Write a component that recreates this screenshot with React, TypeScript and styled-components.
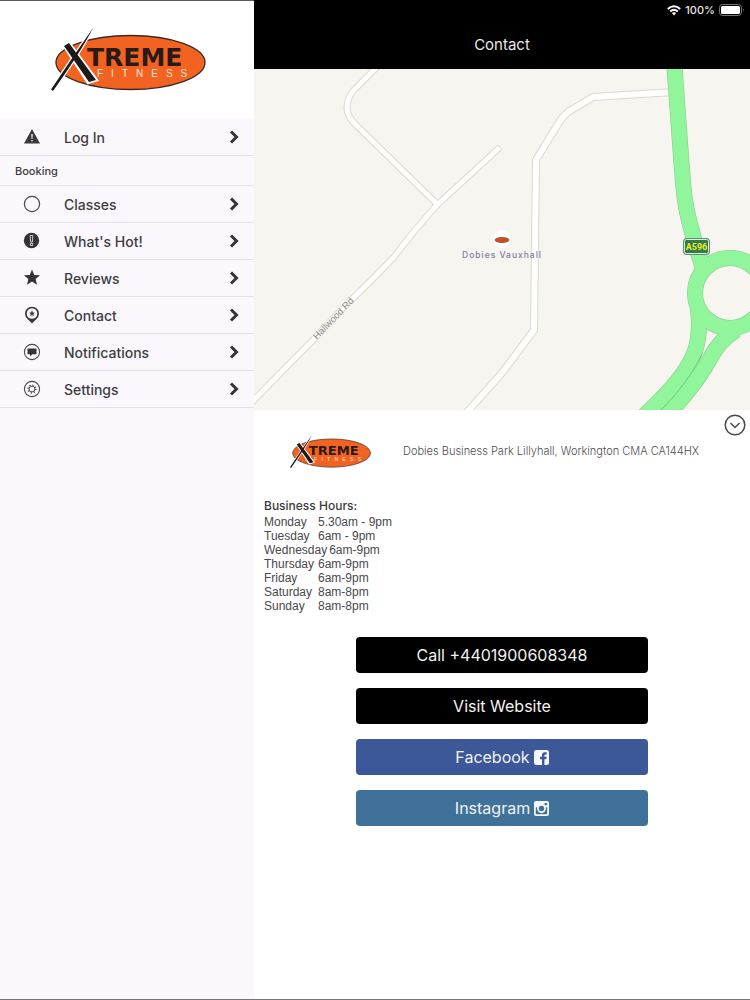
import React from "react";
import styled, { createGlobalStyle } from "styled-components";

const sans = `"Liberation Sans", Arial, sans-serif`;
const ui = `Inter, "Liberation Sans", sans-serif`;

const GlobalStyle = createGlobalStyle`
  *, *::before, *::after { box-sizing: border-box; }
  body { margin: 0; background: #fff; color: #3c3a3e; font-family: ${sans}; }
`;

const Screen = styled.div`
  display: flex;
  min-height: 100vh;
  border-bottom: 1px solid #77757a;
`;

const Sidebar = styled.aside`
  flex: 0 0 254px;
  background: #faf8fc;
  border-top: 1px solid #5c595e;
`;

const Brand = styled.div`
  height: 118px;
  padding: 27px 0 0 51px;
  background: #fff;
`;

const MenuList = styled.ul`
  list-style: none;
  margin: 0;
  padding: 0;
`;

const MenuItem = styled.li`
  border-bottom: 1px solid #e3e1e6;
`;

const MenuLink = styled.a`
  display: grid;
  grid-template-columns: 20px 1fr 16px;
  column-gap: 22px;
  align-items: center;
  height: 36px;
  padding: 0 12px 0 22px;
  color: #3f3d41;
  font: 500 14px/20px ${ui};
  text-decoration: none;
  svg { display: block; }
`;

const MenuLabel = styled.span`
  padding-top: 2px;
`;

const MenuHeading = styled.h2`
  margin: 0;
  padding: 1px 15px 0;
  font: 500 11px/28px ${ui};
  color: #3f3d41;
  border-bottom: 1px solid #e3e1e6;
`;

const Main = styled.main`
  flex: 1;
  min-width: 0;
  background: #fff;
`;

const TopBar = styled.header`
  height: 69px;
  background: #000;
  color: #e8e8e8;
`;

const StatusBar = styled.div`
  display: flex;
  justify-content: flex-end;
  align-items: center;
  gap: 4px;
  height: 20px;
  padding-right: 5px;
  font: 500 11px/20px ${ui};
`;

const Title = styled.h1`
  margin: 0;
  padding-top: 15px;
  text-align: center;
  font: 400 15px/20px ${ui};
`;

const MapView = styled.svg`
  display: block;
  width: 100%;
  height: 341px;
  background: #f7f5ef;
`;

const InfoRow = styled.section`
  display: flex;
  align-items: center;
  height: 82px;
  padding: 0 4px 0 36px;
`;

const Address = styled.address`
  flex: 1;
  margin-left: 32px;
  font: normal 300 11px/16px ${ui};
  color: #4e4c50;
`;

const Toggle = styled.button`
  align-self: flex-start;
  margin-top: 4px;
  padding: 0;
  border: 0;
  background: none;
  svg { display: block; }
`;

const Hours = styled.section`
  padding: 5px 10px 0;
`;

const HoursTitle = styled.h2`
  margin: 0;
  font: 500 12px/18px ${ui};
`;

const HoursTable = styled.table`
  display: block;
  font: 400 12px/14px ${sans};
  color: #4a484c;
  tbody { display: block; }
`;

const HoursRow = styled.tr`
  display: flex;
  gap: 2px;
`;

const Day = styled.th`
  min-width: 52px;
  padding: 0;
  font-weight: 400;
  text-align: left;
`;

const Time = styled.td`
  padding: 0;
`;

const Actions = styled.nav`
  display: flex;
  flex-direction: column;
  gap: 15px;
  width: 59%;
  margin: 24px auto 0;
`;

const ActionButton = styled.button<{ $color: string }>`
  display: flex;
  align-items: center;
  justify-content: center;
  gap: 4px;
  height: 36px;
  padding: 0;
  border: 0;
  border-radius: 4px;
  background: ${(p) => p.$color};
  color: #f2f2f2;
  font: 400 16px/20px ${ui};
`;

const Logo = ({ width, height }: { width: number; height: number }) => (
  <svg width={width} height={height} viewBox="51 28 155 63" role="img" aria-label="Xtreme Fitness">
    <ellipse cx="130.500" cy="62.500" rx="74.500" ry="27" fill="#f26322" stroke="#3a2a26" strokeWidth="1.300" />
    <path d="M93 28 Q82 50 53 91 L51 89.500 Q72 58 93 28Z M64 46 L69 42.500 L97 80 L88 83Z" fill="#fff" stroke="#fff" strokeWidth="2.500" />
    <path d="M93 28 Q82 50 53 91 L51 89.500 Q72 58 93 28Z M64 46 L69 43 L96 80 L89 82Z" fill="#1d191b" />
    <text x="87" y="66" fontFamily="DejaVu Sans" fontWeight="700" fontSize="25" fill="#2a1a17">TREME</text>
    <text x="97" y="77" fontFamily="Liberation Sans" fontSize="10" letterSpacing="8" fill="#ffe0cc">FITNESS</text>
  </svg>
);

const Chevron = () => (
  <svg width="16" height="16" viewBox="0 0 16 16" fill="none" stroke="#353337" strokeWidth="3">
    <path d="M5 2.500 L10.500 8 L5 13.500" />
  </svg>
);

const STAR = "M10 1.500 L12.400 7.300 L18.500 7.700 L13.800 11.600 L15.300 17.500 L10 14.300 L4.700 17.500 L6.200 11.600 L1.500 7.700 L7.600 7.300Z";

const icons: Record<string, React.ReactNode> = {
  warning: (
    <>
      <path d="M10 2 L18 16.500 H2Z" fill="#3a383c" />
      <path d="M9 7 H11 L10.600 12 H9.400Z M9.200 13 H10.800 V14.600 H9.200Z" fill="#c9c7cb" />
    </>
  ),
  circle: <circle cx="10" cy="10" r="7.600" fill="none" stroke="#4a484c" strokeWidth="1.200" />,
  alert: (
    <>
      <circle cx="9.500" cy="9.500" r="7.700" fill="#343236" />
      <path d="M8.200 4.500 H10.800 L10.400 11 H8.600Z M8.400 12.300 H10.600 V14.500 H8.400Z" fill="#343236" stroke="#dddbe0" strokeWidth="0.900" />
    </>
  ),
  star: <path d={STAR} fill="#343236" transform="translate(0.500 0) scale(0.950)" />,
  pin: (
    <>
      <path d="M10 18.500 L5.500 14 A7 7 0 1 1 14.500 14Z" fill="#3a383c" />
      <circle cx="10" cy="8.500" r="5.300" fill="#faf8fc" />
      <path d={STAR} fill="#3a383c" transform="translate(6.500 5) scale(0.350)" />
    </>
  ),
  chat: (
    <>
      <circle cx="10" cy="10" r="7.600" fill="none" stroke="#4a484c" strokeWidth="1.100" />
      <path d="M6.200 6.500 H13.800 Q14.500 6.500 14.500 7.200 V11.500 Q14.500 12.200 13.800 12.200 H10.500 L8 14.200 V12.200 H6.200 Q5.500 12.200 5.500 11.500 V7.200 Q5.500 6.500 6.200 6.500Z" fill="#343236" />
    </>
  ),
  gear: (
    <g fill="none" stroke="#4a484c">
      <circle cx="10" cy="10" r="7.600" strokeWidth="1.100" />
      <circle cx="10" cy="10" r="2.900" />
      <circle cx="10" cy="10" r="3.900" strokeWidth="1.500" strokeDasharray="1.200 1.863" />
    </g>
  ),
};

const MenuRow = ({ icon, label }: { icon: string; label: string }) => (
  <MenuItem>
    <MenuLink href="#">
      <svg width="20" height="20" viewBox="0 0 20 20" aria-hidden="true">{icons[icon]}</svg>
      <MenuLabel>{label}</MenuLabel>
      <Chevron />
    </MenuLink>
  </MenuItem>
);

const booking = [
  ["circle", "Classes"],
  ["alert", "What's Hot!"],
  ["star", "Reviews"],
  ["pin", "Contact"],
  ["chat", "Notifications"],
  ["gear", "Settings"],
];

const hours = [
  ["Monday", "5.30am - 9pm"],
  ["Tuesday", "6am - 9pm"],
  ["Wednesday", "6am-9pm"],
  ["Thursday", "6am-9pm"],
  ["Friday", "6am-9pm"],
  ["Saturday", "8am-8pm"],
  ["Sunday", "8am-8pm"],
];

const lanes = [
  "M382 62 L354 90 Q347 98 347 108 Q347 115 354 123 L437 204",
  "M498 149 L437 205 Q412 233 394 257 Q370 282 349 302 L314 339 L250 404",
];
const avenue = "M674 92 L593 97 L568 112 Q562 117 558 124 L536 160 L534 330 L502 373 L460 420";
const trunk = [
  "M674 60 L682 170 Q684 200 688 216 Q693 238 703 268",
  "M698 308 Q701 336 694 354 C686 375 664 397 640 420",
  "M736 330 Q719 341 711 357 C700 378 684 398 662 420",
];

const StreetMap = () => (
  <MapView viewBox="254 69 496 341" preserveAspectRatio="xMidYMid slice" role="img" aria-label="Map">
    <g fill="none" strokeLinecap="round" strokeLinejoin="round">
      <g stroke="#dad8d2">
        {lanes.map((d) => <path key={d} d={d} strokeWidth="7" />)}
        <path d={avenue} strokeWidth="8" strokeLinejoin="miter" />
      </g>
      <g stroke="#fffffd">
        {lanes.map((d) => <path key={d} d={d} strokeWidth="5" />)}
        <path d={avenue} strokeWidth="6" strokeLinejoin="miter" />
      </g>
      <g stroke="#85c98c" strokeWidth="16" strokeLinecap="butt">
        {trunk.map((d) => <path key={d} d={d} />)}
        <circle cx="730" cy="293" r="35" />
      </g>
      <g stroke="#91f59b" strokeWidth="15" strokeLinecap="butt">
        {trunk.map((d) => <path key={d} d={d} />)}
        <circle cx="730" cy="293" r="35" />
      </g>
      <path d="M702 354 C692 374 680 391 660 411" stroke="#74c97e" />
    </g>
    <rect x="683.500" y="238.500" width="26" height="16" rx="3" fill="#2f7d4b" stroke="#5f8f70" />
    <rect x="684.500" y="239.500" width="24" height="14" rx="2" fill="none" stroke="#dfeee2" />
    <text x="696.500" y="250" textAnchor="middle" fontFamily="Roboto" fontWeight="700" fontSize="9" fill="#f5e72a">A596</text>
    <text transform="translate(317 340) rotate(-46)" fontFamily="Liberation Sans" fontSize="9.500" fill="#8f8d8b" stroke="#f7f5ef" strokeWidth="2" paintOrder="stroke">Hallwood Rd</text>
    <circle cx="502" cy="239" r="9" fill="#fff" />
    <ellipse cx="502" cy="240" rx="7" ry="2.500" fill="#c8501f" stroke="#a8573c" />
    <text x="502" y="258" textAnchor="middle" fontFamily="Inter" fontWeight="500" fontSize="8.500" letterSpacing="1" fill="#7d7ca3">Dobies Vauxhall</text>
  </MapView>
);

export default function App() {
  return (
    <>
      <GlobalStyle />
      <Screen>
        <Sidebar>
          <Brand><Logo width={155} height={63} /></Brand>
          <MenuList><MenuRow icon="warning" label="Log In" /></MenuList>
          <MenuHeading>Booking</MenuHeading>
          <MenuList>
            {booking.map(([icon, label]) => <MenuRow key={label} icon={icon} label={label} />)}
          </MenuList>
        </Sidebar>
        <Main>
          <TopBar>
            <StatusBar>
              <svg width="14" height="11" viewBox="0 0 14 11" aria-hidden="true" fill="none" stroke="#fff" strokeWidth="2">
                <path d="M0.800 4 Q7 -1.600 13.200 4" />
                <path d="M3.200 6.500 Q7 3.200 10.800 6.500" />
                <path d="M4.900 8 Q7 6.400 9.100 8 L7 10.400Z" fill="#fff" stroke="none" />
              </svg>
              <span>100%</span>
              <svg width="26" height="12" viewBox="0 0 26 12" aria-hidden="true">
                <rect x="0.500" y="0.500" width="22" height="11" rx="3" fill="none" stroke="#77757a" />
                <rect x="2" y="2" width="19" height="8" rx="1.500" fill="#fff" />
                <path d="M24 4 Q25.500 6 24 8Z" fill="#77757a" />
              </svg>
            </StatusBar>
            <Title>Contact</Title>
          </TopBar>
          <StreetMap />
          <InfoRow>
            <Logo width={81} height={33} />
            <Address>Dobies Business Park Lillyhall, Workington CMA CA144HX</Address>
            <Toggle aria-label="Collapse details">
              <svg width="22" height="22" viewBox="0 0 22 22" fill="none" stroke="#4a484c" strokeWidth="1.500">
                <circle cx="11" cy="11" r="9.800" />
                <path d="M6.500 9 L11 13.500 L15.500 9" />
              </svg>
            </Toggle>
          </InfoRow>
          <Hours>
            <HoursTitle>Business Hours:</HoursTitle>
            <HoursTable>
              <tbody>
                {hours.map(([day, time]) => (
                  <HoursRow key={day}><Day scope="row">{day}</Day><Time>{time}</Time></HoursRow>
                ))}
              </tbody>
            </HoursTable>
          </Hours>
          <Actions>
            <ActionButton $color="#000">Call +4401900608348</ActionButton>
            <ActionButton $color="#000">Visit Website</ActionButton>
            <ActionButton $color="#3c5899">
              Facebook
              <svg width="15" height="15" viewBox="0 0 15 15" aria-hidden="true">
                <rect width="15" height="15" rx="2.500" fill="#f5f7fb" />
                <path d="M8 15 V9.200 H6 V6.800 H8 V5 Q8 2.300 10.800 2.300 H12.700 V4.600 H11.400 Q10.400 4.600 10.400 5.500 V6.800 H12.700 L12.300 9.200 H10.400 V15Z" fill="#3c5899" />
              </svg>
            </ActionButton>
            <ActionButton $color="#40719b">
              Instagram
              <svg width="15" height="15" viewBox="0 0 15 15" aria-hidden="true">
                <rect width="15" height="15" rx="2" fill="#f5f7fb" />
                <path d="M1.800 6.300 H3.200 A4.500 4.500 0 1 0 11.800 6.300 H13.200 V12.400 Q13.200 13.200 12.400 13.200 H2.600 Q1.800 13.200 1.800 12.400Z" fill="#40719b" />
                <circle cx="7.500" cy="7.500" r="3.600" fill="#f5f7fb" />
                <circle cx="7.500" cy="7.500" r="2.700" fill="#40719b" />
                <rect x="10.600" y="1.900" width="2.500" height="2.400" rx="0.500" fill="#40719b" />
              </svg>
            </ActionButton>
          </Actions>
        </Main>
      </Screen>
    </>
  );
}
